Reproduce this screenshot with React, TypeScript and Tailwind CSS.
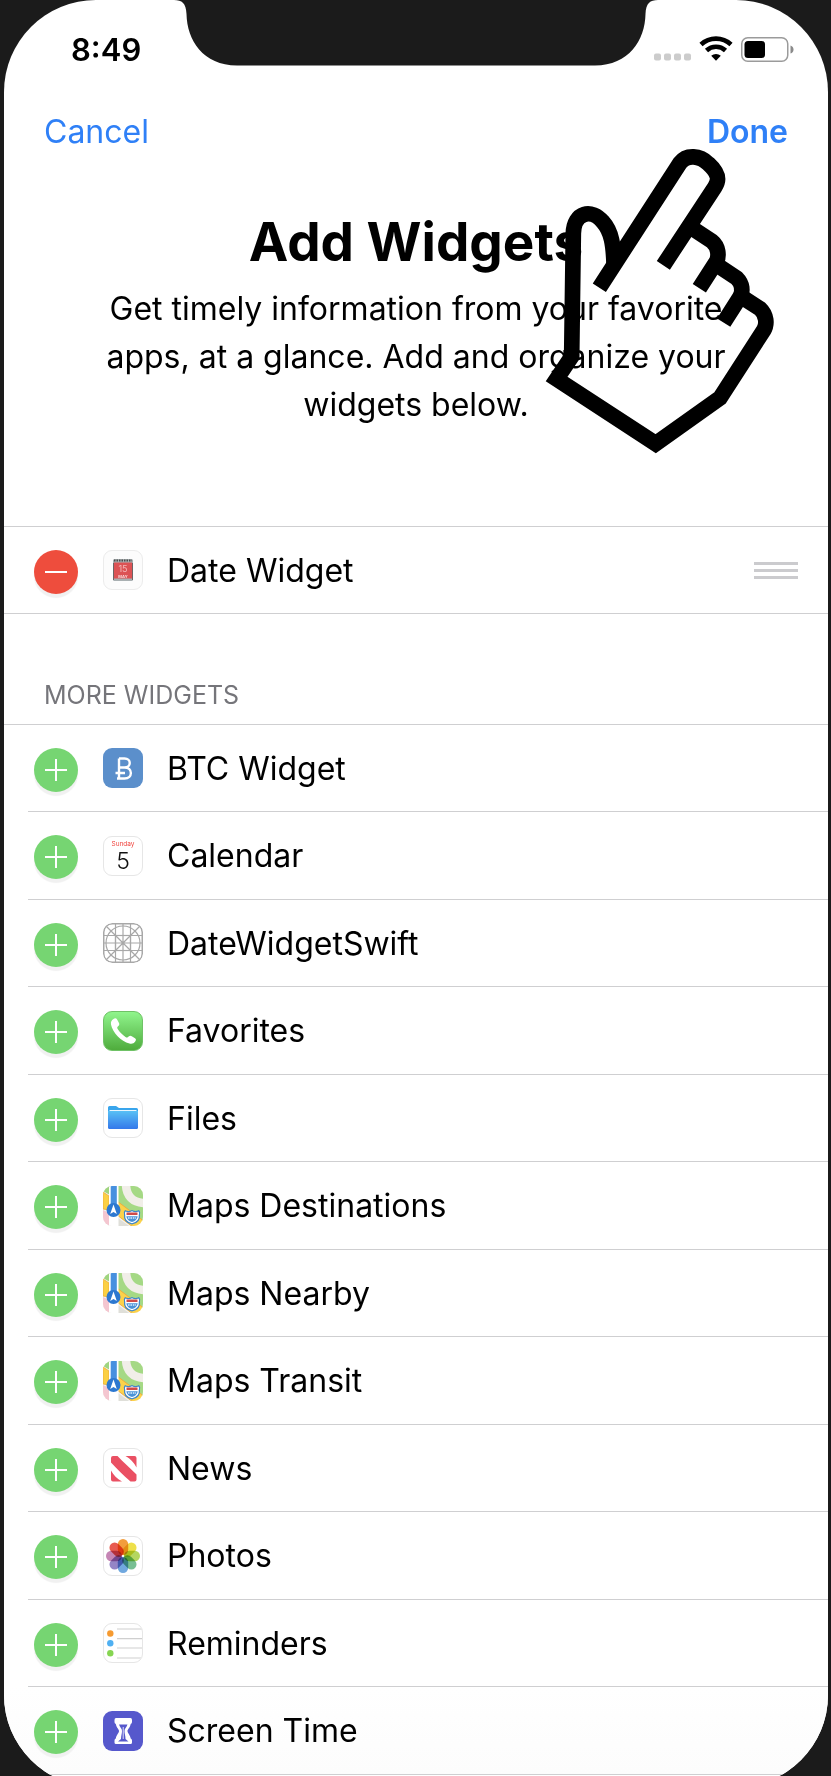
import type { ReactNode } from "react";

function Tile({ children, className = "" }: { children?: ReactNode; className?: string }) {
  return (
    <span className={`block size-10 shrink-0 overflow-hidden rounded-[9px] ${className}`} aria-hidden="true">
      {children}
    </span>
  );
}

const outlined = "border border-[#e6e6e6] bg-white";

function DateIcon() {
  return (
    <Tile className="border border-[#ececec] bg-[#fcfcfc]">
      <svg viewBox="1 1 38 38" className="block size-full">
        <rect x="10" y="9" width="20" height="22" rx="1.5" fill="#a9b0b2" />
        <path d="M11 10.5H29" stroke="#4c4c4c" strokeWidth="2" strokeDasharray="1.5 1" />
        <rect x="11" y="12.5" width="18" height="16" fill="#dc5254" />
        <path d="M10.5 13V30M29.5 13V30" stroke="#6d6465" strokeWidth="1" />
        <text x="20" y="22" textAnchor="middle" fontSize="9" fill="#f4b7b7">15</text>
        <text x="20" y="27.500" textAnchor="middle" fontSize="4" fontWeight="700" fill="#f8dcdc">MAY</text>
      </svg>
    </Tile>
  );
}

function BtcIcon() {
  return (
    <Tile className="bg-[#5b8fcb]">
      <svg viewBox="0 0 40 40" className="block size-full">
        <path
          d="M16 10.500V30.500M16 10.500H21.500C28.500 10.500 28.500 19.500 21.500 19.500H16M21.500 19.500C30 19.500 30 30.500 21.500 30.500H14M12.500 25H22"
          fill="none"
          stroke="#fff"
          strokeWidth="2.400"
        />
      </svg>
    </Tile>
  );
}

function CalendarIcon() {
  return (
    <Tile className={outlined}>
      <svg viewBox="1 1 38 38" className="block size-full">
        <text x="20" y="10" textAnchor="middle" fontSize="6.500" fill="#f0453f">Sunday</text>
        <text x="20" y="32.500" textAnchor="middle" fontSize="23" fontWeight="300" fill="#111">5</text>
      </svg>
    </Tile>
  );
}

function TemplateIcon() {
  return (
    <Tile>
      <svg viewBox="0 0 40 40" className="block size-full" fill="none" stroke="#a8a8a8" strokeWidth="1.200">
        <rect x="0.750" y="0.750" width="38.500" height="38.500" rx="8.500" strokeWidth="1.500" />
        <path d="M12.500 1V39M20 1V39M27.500 1V39M1 12.500H39M1 20H39M1 27.500H39M3.500 3.500L36.500 36.500M36.500 3.500L3.500 36.500" />
        <circle cx="20" cy="20" r="17" />
        <rect x="12.500" y="12.500" width="15" height="15" />
      </svg>
    </Tile>
  );
}

function PhoneIcon() {
  return (
    <Tile className="border border-[#6fc266] bg-linear-to-b from-[#90f58c] to-[#4fac3c]">
      <svg viewBox="1 1 38 38" className="block size-full">
        <path
          d="M10.500 8C12 7 13.200 7.200 14.100 8.500L16 12C16.700 13.300 16.200 14.300 14.800 15.500C13.800 16.500 14.200 17.300 15.200 18.800C17 21.500 19.500 24 22.500 26C24 27 24.600 26.700 25.600 25.600C26.700 24.500 27.600 24.500 28.800 25.200L32 27.300C33.300 28.200 33.200 29.300 32.200 30.600C30.800 32.500 29 33.200 26.500 32.600C18 30.500 9.500 21.500 8 13.500C7.600 11 8.500 9.200 10.500 8Z"
          fill="#fff"
        />
      </svg>
    </Tile>
  );
}

function FilesIcon() {
  return (
    <Tile className={outlined}>
      <svg viewBox="1 1 38 38" className="block size-full">
        <defs>
          <linearGradient id="folder" x1="0" y1="0" x2="0" y2="1">
            <stop offset="0" stopColor="#58c0f5" />
            <stop offset="1" stopColor="#3478ea" />
          </linearGradient>
        </defs>
        <path d="M5 9.500Q5 8 6.500 8H12.500Q13.500 8 14.500 9T16.500 10H33.500Q35 10 35 11.500V15H5Z" fill="#39a5ec" />
        <path d="M5 13H35V29.500Q35 31 33.500 31H6.500Q5 31 5 29.500Z" fill="url(#folder)" />
        <path d="M6.500 12.500H33.500" stroke="#e9f6fe" strokeWidth="1" />
      </svg>
    </Tile>
  );
}

function MapsIcon() {
  return (
    <Tile className="bg-[#f4f2ee]">
      <svg viewBox="0 0 40 40" className="block size-full">
        <path d="M0 0H40V40H0Z" fill="#f4f2ee" />
        <path d="M0 0H7V9L0 5Z" fill="#9fd57f" />
        <path d="M15 0H40V36L15 17Z" fill="#a5d985" />
        <path d="M23 -2C23 10 30 17 42 17" fill="none" stroke="#f1eee8" strokeWidth="8.500" />
        <path d="M0 6L6 10V24L0 23Z" fill="#fbd044" stroke="#eda93a" strokeWidth="0.800" />
        <path d="M0 24L6 27V40H0Z" fill="#f4c6d0" />
        <path d="M15 32L26 40H15Z" fill="#dfdfd9" />
        <path d="M14 15L42 36V44H34L14 29Z" fill="#fcd24a" stroke="#eda93a" strokeWidth="0.900" />
        <path d="M6 0H15.500V40H6Z" fill="#fff" />
        <path d="M7.700 0H13.800V24H7.700Z" fill="#4790df" />
        <circle cx="10.500" cy="24" r="7" fill="#2d78d0" />
        <path d="M10.500 18.500L13.800 28L10.500 26L7.200 28Z" fill="#fff" />
        <path
          d="M22 24Q25.500 26 29 24Q32.500 26 36 24Q38 26 37 28.500Q38 37 29 38.500Q20 37 21 28.500Q20 26 22 24Z"
          fill="#3f86c9"
        />
        <path
          d="M22.500 25.500Q25.500 27 29 25.300Q32.500 27 35.500 25.500Q36.500 27 35.800 28.700Q36.500 35.500 29 37.200Q21.500 35.500 22.200 28.700Q21.500 27 22.500 25.500Z"
          fill="#fff"
        />
        <path d="M23.500 26.500H34.500V29H23.500Z" fill="#cf4b48" />
        <path d="M23.300 30.300H34.700Q34 35 29 36Q24 35 23.300 30.300Z" fill="#4a92d6" />
        <path d="M25 32H33" stroke="#d7eafb" strokeWidth="1.600" strokeDasharray="1.600 0.800" />
      </svg>
    </Tile>
  );
}

function NewsIcon() {
  return (
    <Tile className={outlined}>
      <svg viewBox="1 1 38 38" className="block size-full" fill="#ea5063">
        <path d="M8 10Q8 8 10 8H14.500C20 14 27 20 33.500 26.500V31.500Q33.500 33.500 31.500 33.500H27.500C20 27 14 21 8 14.500Z" />
        <path d="M22.500 8H31.500Q33.500 8 33.500 10V19.500C31 14.500 27.500 11 22.500 8Z" />
        <path d="M8 22.500C10.500 27 14 31 19 33.500H10Q8 33.500 8 31.500Z" />
      </svg>
    </Tile>
  );
}

const petals = ["#f29d3c", "#eee04a", "#b4d660", "#78bf93", "#70a8df", "#9485c6", "#c586b5", "#e85b50"];

function PhotosIcon() {
  return (
    <Tile className={outlined}>
      <svg viewBox="1 1 38 38" className="block size-full">
        {petals.map((color, i) => (
          <rect
            key={color}
            x="14.800"
            y="3"
            width="10.400"
            height="16"
            rx="5.200"
            fill={color}
            transform={`rotate(${i * 45} 20 20)`}
            className="mix-blend-multiply"
          />
        ))}
      </svg>
    </Tile>
  );
}

function RemindersIcon() {
  return (
    <Tile className={outlined}>
      <svg viewBox="1 1 38 38" className="block size-full">
        <path d="M14 6H40M14 15.700H40M14 25H40M14 35H40" stroke="#cfcfcf" strokeWidth="1.200" />
        <circle cx="7.300" cy="10.500" r="3.200" fill="#f69a30" />
        <circle cx="7.300" cy="20.300" r="3.200" fill="#4fb0f2" />
        <circle cx="7.300" cy="30.300" r="3.200" fill="#86d552" />
      </svg>
    </Tile>
  );
}

function ScreenTimeIcon() {
  return (
    <Tile className="bg-[#5658cc]">
      <svg viewBox="0 0 40 40" className="block size-full">
        <path
          d="M13 7H27.500Q29 7 29 9V11Q29 12.500 27.700 13C27 17 24.500 18 24.500 20S27 23.500 27.700 27.500Q29 28 29 29.500V31.500Q29 33 27.500 33H13Q11.500 33 11.500 31.500V29.500Q11.500 28 12.800 27.500C13.500 23.500 16 22 16 20S13.500 17 12.800 13Q11.500 12.500 11.500 11V9Q11.500 7 13 7Z"
          fill="#fff"
        />
        <path d="M16 13.500H24.500C23.500 16.500 21.500 17.500 21.500 20S22.500 25 22.500 28L25.500 30.500H15L18 28C18 25 19 22.500 19 20S17 16.500 16 13.500Z" fill="#5658cc" />
        <path d="M20.250 16V28" stroke="#c9caf1" strokeWidth="1.200" />
      </svg>
    </Tile>
  );
}

const widgets: { name: string; icon: ReactNode }[] = [
  { name: "BTC Widget", icon: <BtcIcon /> },
  { name: "Calendar", icon: <CalendarIcon /> },
  { name: "DateWidgetSwift", icon: <TemplateIcon /> },
  { name: "Favorites", icon: <PhoneIcon /> },
  { name: "Files", icon: <FilesIcon /> },
  { name: "Maps Destinations", icon: <MapsIcon /> },
  { name: "Maps Nearby", icon: <MapsIcon /> },
  { name: "Maps Transit", icon: <MapsIcon /> },
  { name: "News", icon: <NewsIcon /> },
  { name: "Photos", icon: <PhotosIcon /> },
  { name: "Reminders", icon: <RemindersIcon /> },
  { name: "Screen Time", icon: <ScreenTimeIcon /> },
];

function RoundButton({ kind, name }: { kind: "add" | "remove"; name: string }) {
  return (
    <button
      type="button"
      aria-label={`${kind === "add" ? "Add" : "Remove"} ${name}`}
      className={`mt-[3px] size-11 shrink-0 rounded-full shadow-[0_4px_1px_#f1f1f1] ${
        kind === "add" ? "bg-[#76d572]" : "bg-[#ee4d3d]"
      }`}
    >
      <svg viewBox="0 0 44 44" className="block size-full" stroke="#fff" strokeWidth="2">
        <path d={kind === "add" ? "M11 22H33M22 11V33" : "M11 22H33"} />
      </svg>
    </button>
  );
}

function WidgetLabel({ name, icon }: { name: string; icon: ReactNode }) {
  return (
    <div className="ml-[25px] flex grow items-center gap-6">
      {icon}
      <span className="pt-px text-[32px] leading-none">{name}</span>
    </div>
  );
}

function StatusBar() {
  return (
    <div className="flex h-[99px] items-center justify-between pr-[34px] pl-[67px]">
      <span className="text-[31px] leading-none font-semibold">8:49</span>
      <svg viewBox="0 0 142 28" className="block h-7 w-[142px]" role="img" aria-label="Wi-Fi, battery at half">
        <g fill="#cccccc">
          <rect x="2" y="17.500" width="7" height="7" rx="2" />
          <rect x="12" y="17.500" width="7" height="7" rx="2" />
          <rect x="22" y="17.500" width="7" height="7" rx="2" />
          <rect x="32" y="17.500" width="7" height="7" rx="2" />
        </g>
        <g fill="none" stroke="#000" strokeWidth="4.600">
          <path d="M49 8.500A22 22 0 0 1 79 8.500" />
          <path d="M54.500 14.500A14 14 0 0 1 73.500 14.500" />
        </g>
        <path d="M64 24.800L59.200 19.800A7 7 0 0 1 68.800 19.800Z" fill="#000" />
        <rect x="89.750" y="1.750" width="46" height="23.500" rx="6" fill="none" stroke="#9b9b9b" strokeWidth="1.500" />
        <rect x="92.500" y="5" width="20.500" height="17" rx="3.500" fill="#000" />
        <path d="M138.500 9.500Q141.500 10.500 141.500 13.500T138.500 17.500Z" fill="#8a8a8a" />
      </svg>
    </div>
  );
}

function Notch() {
  return (
    <svg viewBox="0 0 492 66" className="absolute top-0 left-1/2 h-[66px] w-[492px] -translate-x-1/2" aria-hidden="true">
      <path
        d="M0 0H4C12 0 16 3 16.500 14C17 40 33 65.500 67 65.500H425C459 65.500 475 40 475.500 14C476 3 480 0 488 0H492Z"
        fill="#1b1b1b"
      />
    </svg>
  );
}

function PointingHand() {
  return (
    <svg
      viewBox="0 0 900 1020"
      className="pointer-events-none absolute top-[130px] right-2 h-[340px] w-[300px]"
      fill="none"
      stroke="#000"
      strokeWidth="47"
      strokeMiterlimit="6"
      aria-hidden="true"
    >
      <path d="M238 473L480 99C500 72 540 76 565 101C597 130 599 150 584 172L430 406" />
      <path d="M520 297L576 334C596 350 597 378 590 394L538 475" />
      <path d="M599 410L650 444C668 462 669 484 660 501L611 578" />
      <path d="M672 505L720 536C740 555 742 583 731 601L600 804L407 941L110 747L155 680L160 310C162 245 215 235 249 276C275 305 280 345 282 400" />
    </svg>
  );
}

export default function App() {
  return (
    <div
      className="min-h-screen overflow-hidden bg-[#1b1b1b] pr-[3px] pl-1 text-black"
      style={{ fontFamily: 'Inter, "Liberation Sans", sans-serif' }}
    >
      <main className="relative -mb-[11px] overflow-hidden rounded-[92px] bg-white pb-3">
        <StatusBar />
        <Notch />

        <nav className="flex h-[66px] items-center justify-between px-10 text-[32px] leading-none text-[#2f80f7]">
          <button type="button">Cancel</button>
          <button type="button" className="font-semibold">Done</button>
        </nav>

        <header className="mx-auto flex max-w-[640px] flex-col items-center gap-[11px] pt-[45px] pb-[97px] text-center">
          <h1 className="text-[53px] leading-[64px] font-bold">Add Widgets</h1>
          <p className="text-[32px] leading-[48px]">
            Get timely information from your favorite apps, at a glance. Add and organize your widgets below.
          </p>
        </header>

        <ul>
          <li className="flex h-[88px] items-center border-y border-[#cfcfd1] pr-[30px] pl-[30px]">
            <RoundButton kind="remove" name="Date Widget" />
            <WidgetLabel name="Date Widget" icon={<DateIcon />} />
            <button type="button" aria-label="Reorder Date Widget" className="flex w-11 flex-col gap-1">
              <span className="block h-[3px] w-full bg-[#cbcbce]" />
              <span className="block h-[3px] w-full bg-[#cbcbce]" />
              <span className="block h-[3px] w-full bg-[#cbcbce]" />
            </button>
          </li>
        </ul>

        <section>
          <h2 className="flex h-[111px] items-end border-b border-[#cfcfd1] px-10 pb-[17px] text-[25px] leading-6 text-[#75757a]">
            MORE WIDGETS
          </h2>
          <ul>
            {widgets.map(({ name, icon }) => (
              <li
                key={name}
                className="ml-6 flex items-center border-b border-[#cfcfd1] pl-[6px] last:ml-0 last:bg-linear-to-b last:from-white last:to-[#fcfcfc] last:pl-[30px] odd:h-[87px] even:h-[88px]"
              >
                <RoundButton kind="add" name={name} />
                <WidgetLabel name={name} icon={icon} />
              </li>
            ))}
          </ul>
        </section>

        <PointingHand />
      </main>
    </div>
  );
}
